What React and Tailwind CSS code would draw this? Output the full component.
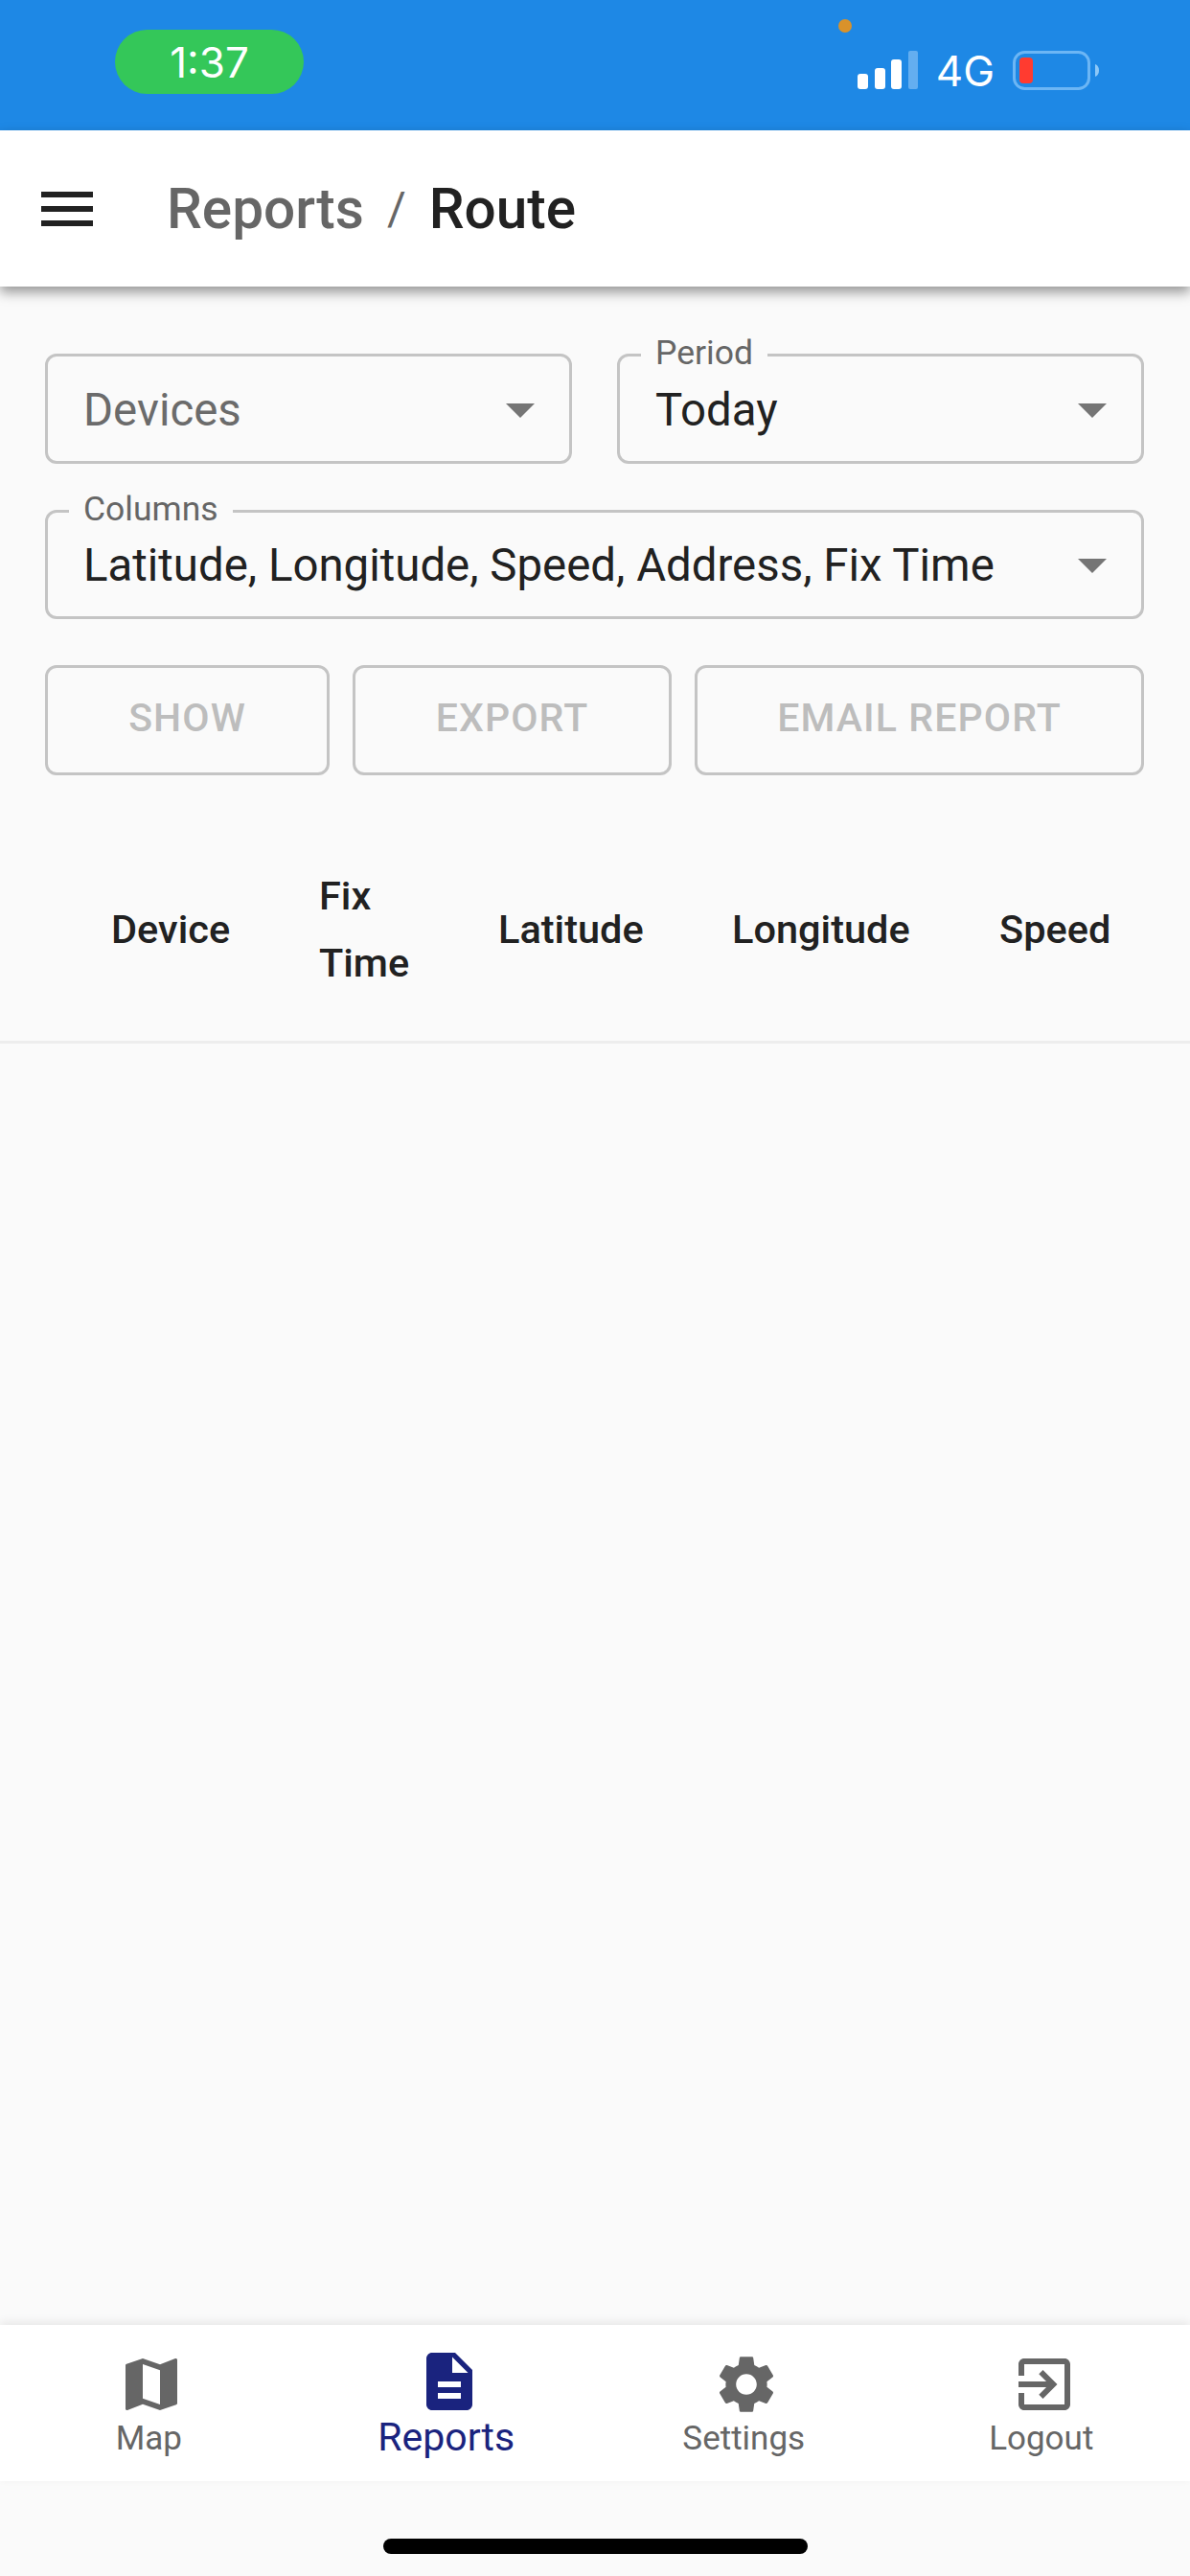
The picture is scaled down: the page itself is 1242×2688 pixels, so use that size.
import React from "react";

const MUI = {
  menu: "M3 18h18v-2H3v2zm0-5h18v-2H3v2zm0-7v2h18V6H3z",
  drop: "M7 10l5 5 5-5z",
  map: "M20.5 3l-.16.03L15 5.1 9 3 3.36 4.9c-.21.07-.36.25-.36.48V20.5c0 .28.22.5.5.5l.16-.03L9 18.9l6 2.1 5.64-1.9c.21-.07.36-.25.36-.48V3.5c0-.28-.22-.5-.5-.5zM15 19l-6-2.11V5l6 2.11V19z",
  desc: "M14 2H6c-1.1 0-1.99.9-1.99 2L4 20c0 1.1.89 2 1.99 2H18c1.1 0 2-.9 2-2V8l-6-6zm2 16H8v-2h8v2zm0-4H8v-2h8v2zm-3-5V3.5L18.5 9H13z",
  gear: "M19.14 12.94c.04-.3.06-.61.06-.94 0-.32-.02-.64-.07-.94l2.03-1.58c.18-.14.23-.41.12-.61l-1.92-3.32c-.12-.22-.37-.29-.59-.22l-2.39.96c-.5-.38-1.03-.7-1.62-.94l-.36-2.54c-.04-.24-.24-.41-.48-.41h-3.84c-.24 0-.43.17-.47.41l-.36 2.54c-.59.24-1.13.57-1.62.94l-2.39-.96c-.22-.08-.47 0-.59.22L2.74 8.87c-.12.21-.08.47.12.61l2.03 1.58c-.05.3-.09.63-.09.94s.02.64.07.94l-2.03 1.58c-.18.14-.23.41-.12.61l1.92 3.32c.12.22.37.29.59.22l2.39-.96c.5.38 1.03.7 1.62.94l.36 2.54c.05.24.24.41.48.41h3.84c.24 0 .44-.17.47-.41l.36-2.54c.59-.24 1.13-.56 1.62-.94l2.39.96c.22.08.47 0 .59-.22l1.92-3.32c.12-.22.07-.47-.12-.61l-2.01-1.58zM12 15.6c-1.98 0-3.6-1.62-3.6-3.6s1.62-3.6 3.6-3.6 3.6 1.62 3.6 3.6-1.62 3.6-3.6 3.6z",
  exit: "M10.09 15.59L11.5 17l5-5-5-5-1.41 1.41L12.67 11H3v2h9.67l-2.58 2.59zM19 3H5c-1.11 0-2 .9-2 2v4h2V5h14v14H5v-4H3v4c0 1.1.89 2 2 2h14c1.1 0 2-.9 2-2V5c0-1.1-.9-2-2-2z",
};

function Icon({ d, className }) {
  return (
    <svg viewBox="0 0 24 24" className={className} fill="currentColor">
      <path d={d} />
    </svg>
  );
}

function Select({ label, value, placeholder, className }) {
  return (
    <div className={"relative flex items-center justify-between rounded-[12px] border-[3px] border-[#c4c4c4] pl-[37px] pr-[15px] " + className}>
      {label && (
        <span className="absolute left-[22px] top-[-25px] bg-[#fafafa] px-[15px] text-[35.5px] leading-[42px] text-[#666666]">
          {label}
        </span>
      )}
      <span className={"mt-[2px] whitespace-nowrap text-[47.4px] leading-[56px] " + (placeholder ? "text-[#6b6b6b]" : "text-[#212121]")}>
        {value || placeholder}
      </span>
      <Icon d={MUI.drop} className="h-[72px] w-[72px] shrink-0 text-[#757575]" />
    </div>
  );
}

function OutlineButton({ children, className }) {
  return (
    <div className={"flex h-[115px] items-center justify-center rounded-[12px] border-[3px] border-[#c4c4c4] pb-[4px] text-[41px] font-medium tracking-[1.1px] text-[#bdbdbd] " + className}>
      {children}
    </div>
  );
}

function NavItem({ icon, label, active }) {
  return (
    <div className={"flex flex-col items-center " + (active ? "pt-[23px] text-[#1a237e]" : "pt-[26px] text-[#666666]")}>
      <Icon d={icon} className="ml-[6px] h-[72px] w-[72px]" />
      <span className={active ? "mt-[-3px] text-[41px] leading-[50px]" : "mt-[-4px] text-[35px] leading-[50px]"}>{label}</span>
    </div>
  );
}

export default function App() {
  return (
    <div className="flex h-[2688px] w-[1242px] flex-col overflow-hidden bg-[#fafafa] font-['Roboto',sans-serif]">
      {/* status bar */}
      <div className="relative flex h-[136px] shrink-0 items-start justify-between bg-[#1e88e5] pl-[120px] pr-[95px] font-['Inter',sans-serif] text-white">
        <span className="absolute left-[875px] top-[20px] h-[14px] w-[14px] rounded-full bg-[#d9922b]" />
        <div className="mt-[31px] flex h-[67px] w-[197px] items-center justify-center rounded-[34px] bg-[#34c759] text-[44px]">
          1:37
        </div>
        <div className="mt-[53px] flex items-start">
          <svg width="64" height="41" viewBox="0 0 64 41">
            <rect x="0" y="24" width="11" height="16" rx="3" fill="#fff" />
            <rect x="18" y="18" width="11" height="22" rx="3" fill="#fff" />
            <rect x="35" y="9" width="11" height="31" rx="3" fill="#fff" />
            <rect x="53" y="0" width="10" height="40" rx="2" fill="#64aef0" />
          </svg>
          <span className="ml-[18px] mt-[-2px] text-[44px] leading-[46px]">4G</span>
          <svg width="90" height="41" viewBox="0 0 90 41" className="ml-[19px]">
            <rect x="1.5" y="1.5" width="78" height="38" rx="11" fill="none" stroke="#6cb6f5" strokeWidth="3" />
            <rect x="7" y="7" width="14" height="27" rx="4" fill="#ff3b30" />
            <path d="M86 14c3 1 4 4 4 6.500s-1 5.500-4 6.500z" fill="#8ec8f7" />
          </svg>
        </div>
      </div>

      {/* app bar */}
      <header className="relative z-10 flex h-[163px] shrink-0 items-center bg-white pl-[34px] shadow-[0_6px_12px_rgba(0,0,0,0.4)]">
        <Icon d={MUI.menu} className="h-[72px] w-[72px] text-[#212121]" />
        <div className="ml-[68px] flex items-center text-[58.500px] font-medium leading-[68px]">
          <span className="text-[#666666]">Reports</span>
          <span className="mx-[24px] text-[48px] font-normal text-[#666666]">/</span>
          <span className="text-[#212121]">Route</span>
        </div>
      </header>

      {/* content */}
      <main className="flex min-h-0 flex-1 flex-col pt-[70px]">
        <div className="flex flex-col gap-[48px] pl-[47px] pr-[48px]">
          <div className="flex gap-[47px]">
            <Select placeholder="Devices" className="h-[115px] flex-1" />
            <Select label="Period" value="Today" className="h-[115px] flex-1" />
          </div>
          <Select label="Columns" value="Latitude, Longitude, Speed, Address, Fix Time" className="h-[114px]" />
          <div className="flex gap-[24px]">
            <OutlineButton className="w-[297px]">SHOW</OutlineButton>
            <OutlineButton className="w-[333px]">EXPORT</OutlineButton>
            <OutlineButton className="flex-1">EMAIL REPORT</OutlineButton>
          </div>
        </div>

        <div className="mt-[41px] grid h-[239px] grid-cols-[217px_187px_244px_279px_1fr] items-center border-b-[3px] border-[#ededed] pl-[116px] pt-[3px] text-[41.500px] font-medium leading-[70px] text-[#212121]">
          <span>Device</span>
          <span>Fix<br />Time</span>
          <span>Latitude</span>
          <span>Longitude</span>
          <span>Speed</span>
        </div>
      </main>

      {/* bottom navigation */}
      <nav className="relative grid h-[163px] shrink-0 grid-cols-4 bg-white shadow-[0_-3px_9px_rgba(0,0,0,0.08)]">
        <NavItem icon={MUI.map} label="Map" />
        <NavItem icon={MUI.desc} label="Reports" active />
        <NavItem icon={MUI.gear} label="Settings" />
        <NavItem icon={MUI.exit} label="Logout" />
      </nav>

      {/* home indicator */}
      <div className="flex h-[99px] shrink-0 justify-center pt-[60px]">
        <div className="h-[16px] w-[443px] rounded-full bg-black" />
      </div>
    </div>
  );
}
